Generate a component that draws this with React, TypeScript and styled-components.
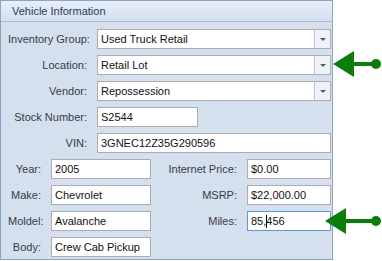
import { FC } from 'react'
import styled, { createGlobalStyle } from 'styled-components'

const GlobalStyle = createGlobalStyle`
  html, body {
    margin: 0;
    padding: 0;
    background: #ffffff;
  }
  body {
    font-family: "Liberation Sans", Arial, sans-serif;
    font-size: 11px;
  }
`

const Page = styled.div`
  position: relative;
  width: 382px;
  height: 261px;
  overflow: hidden;
`

const Panel = styled.div`
  width: 331px;
  height: 258px;
  border: 1px solid #8ea3c0;
  background: #d5e0ef;
  display: flex;
  flex-direction: column;
`

const Header = styled.div`
  height: 20px;
  display: flex;
  align-items: center;
  padding-left: 11px;
  background: linear-gradient(#e7eef8, #d3dff0);
  border-bottom: 1px solid #a7b9d3;
  color: #2b3c55;
`

const Body = styled.div`
  display: flex;
  flex-direction: column;
  gap: 6px;
  padding: 7px 1px 0 7px;
`

const Row = styled.div`
  display: grid;
  grid-template-columns: 79px 1fr;
  column-gap: 10px;
  align-items: center;
  height: 20px;
`

const PairRow = styled.div`
  display: grid;
  grid-template-columns: 33px 100px 76px 84px;
  column-gap: 10px;
  align-items: center;
  height: 20px;
`

const Label = styled.div`
  text-align: right;
  color: #353b46;
  white-space: nowrap;
`

const Field = styled.div<{ $width?: number; $focused?: boolean }>`
  box-sizing: border-box;
  height: 20px;
  width: ${({ $width }) => ($width ? `${$width}px` : '100%')};
  background: #ffffff;
  border: 1px solid ${({ $focused }) => ($focused ? '#5b9bd5' : '#abadb3')};
  display: flex;
  align-items: center;
  padding-left: 3px;
  color: #111111;
  white-space: nowrap;
  overflow: hidden;
`

const Value = styled.span`
  flex: 1;
`

const Caret = styled.span`
  display: inline-block;
  width: 1px;
  height: 13px;
  background: #000;
  margin-right: -1px;
`

const DropButton = styled.div`
  width: 16px;
  height: 18px;
  box-sizing: border-box;
  border-left: 1px solid #b7c3d3;
  background: #eef2f8;
  display: flex;
  align-items: center;
  justify-content: center;
`

const Triangle = styled.span`
  width: 0;
  height: 0;
  border-left: 3px solid transparent;
  border-right: 3px solid transparent;
  border-top: 3px solid #4d5a6c;
`

const Arrow = styled.svg<{ $top: number; $left: number }>`
  position: absolute;
  top: ${({ $top }) => $top}px;
  left: ${({ $left }) => $left}px;
`

const Combo: FC<{ value: string }> = ({ value }) => (
  <Field>
    <Value>{value}</Value>
    <DropButton>
      <Triangle />
    </DropButton>
  </Field>
)

// tip sits at (left, top + 13); length is tip-to-dot-centre distance
const GreenArrow: FC<{ top: number; left: number; length: number }> = ({ top, left, length }) => (
  <Arrow $top={top} $left={left} width={length + 6} height="26" viewBox={`0 0 ${length + 6} 26`}>
    <polygon points="0,13 21,0 21,26" fill="#0a7d0a" />
    <rect x="20" y="11" width={length - 20} height="4" fill="#0a7d0a" />
    <circle cx={length} cy="13" r="5" fill="#0a7d0a" />
  </Arrow>
)

const App: FC = () => {
  return (
    <Page>
      <GlobalStyle />
      <Panel>
        <Header>Vehicle Information</Header>
        <Body>
          <Row>
            <Label>Inventory Group:</Label>
            <Combo value="Used Truck Retail" />
          </Row>
          <Row>
            <Label>Location:</Label>
            <Combo value="Retail Lot" />
          </Row>
          <Row>
            <Label>Vendor:</Label>
            <Combo value="Repossession" />
          </Row>
          <Row>
            <Label>Stock Number:</Label>
            <Field $width={101}>S2544</Field>
          </Row>
          <Row>
            <Label>VIN:</Label>
            <Field>3GNEC12Z35G290596</Field>
          </Row>
          <PairRow>
            <Label>Year:</Label>
            <Field>2005</Field>
            <Label>Internet Price:</Label>
            <Field>$0.00</Field>
          </PairRow>
          <PairRow>
            <Label>Make:</Label>
            <Field>Chevrolet</Field>
            <Label>MSRP:</Label>
            <Field>$22,000.00</Field>
          </PairRow>
          <PairRow>
            <Label>Moldel:</Label>
            <Field>Avalanche</Field>
            <Label>Miles:</Label>
            <Field $focused>
              85,<Caret />456
            </Field>
          </PairRow>
          <PairRow>
            <Label>Body:</Label>
            <Field>Crew Cab Pickup</Field>
          </PairRow>
        </Body>
      </Panel>
      <GreenArrow top={51} left={333} length={43} />
      <GreenArrow top={208} left={325} length={51} />
    </Page>
  )
}

export default App
